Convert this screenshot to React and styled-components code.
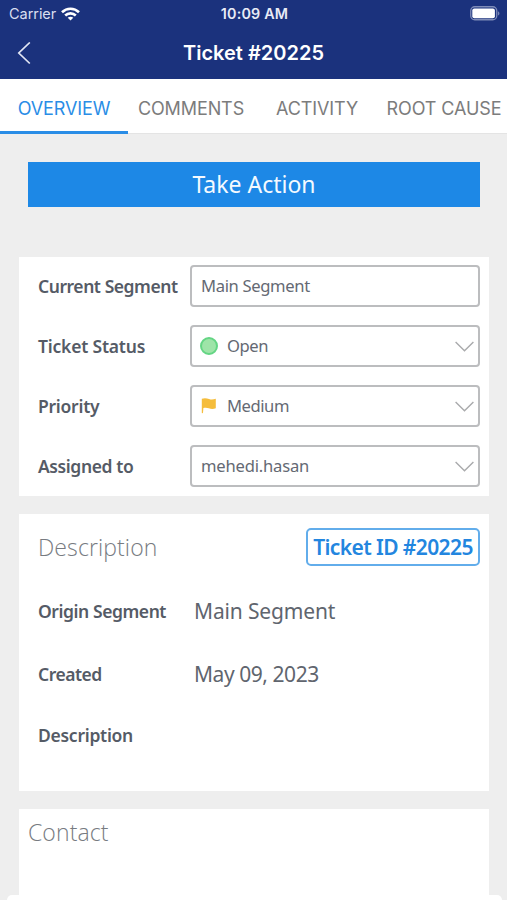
import React from 'react';
import styled, { createGlobalStyle } from 'styled-components';

const GlobalStyle = createGlobalStyle`
  * {
    box-sizing: border-box;
  }
  body {
    margin: 0;
    background: #eeeeee;
    overflow: hidden;
  }
`;

const Screen = styled.div`
  position: relative;
  width: 507px;
  height: 900px;
  overflow: hidden;
  background: #eeeeee;
  font-family: 'Noto Sans', sans-serif;
  color: #555b66;
`;

const Header = styled.header`
  height: 79px;
  background: #1b327d;
  color: #ffffff;
  font-family: Inter, sans-serif;
`;

const StatusBar = styled.div`
  height: 27px;
  padding: 0 7px 0 9px;
  display: grid;
  grid-template-columns: 1fr auto 1fr;
  align-items: center;
`;

const Carrier = styled.div`
  display: flex;
  align-items: center;
  gap: 5px;
  font-size: 14.5px;
  letter-spacing: -0.05px;
  color: #d9def0;
`;

const Clock = styled.div`
  font-size: 14.3px;
  font-weight: 600;
  letter-spacing: 0.2px;
  color: #e8ebf6;
`;

const Battery = styled.svg`
  justify-self: end;
`;

const NavBar = styled.div`
  height: 52px;
  padding: 0 17px;
  display: grid;
  grid-template-columns: 1fr auto 1fr;
  align-items: center;
`;

const Title = styled.h1`
  margin: 0;
  font-size: 20px;
  font-weight: 600;
`;

const Tabs = styled.nav`
  height: 55px;
  display: flex;
  background: #ffffff;
  border-bottom: 1px solid #e4e4e4;
`;

const Tab = styled.div`
  flex: none;
  width: ${(props) => props.width}px;
  height: 55px;
  padding-top: 6px;
  display: flex;
  align-items: center;
  justify-content: center;
  font-family: Inter, sans-serif;
  font-size: 18px;
  letter-spacing: -0.1px;
  white-space: nowrap;
  color: ${(props) => (props.active ? '#2a8de6' : '#7c7c7c')};
  border-bottom: 3px solid ${(props) => (props.active ? '#2a8de6' : 'transparent')};
`;

const Content = styled.main`
  padding: 28px 18px 0 19px;
  display: flex;
  flex-direction: column;
`;

const ActionButton = styled.button`
  height: 45px;
  margin: 0 9px 50px;
  padding: 0 0 1px;
  border: 0;
  background: #1d88e6;
  color: #f4faff;
  font-family: inherit;
  font-size: 23px;
`;

const Card = styled.section`
  height: ${(props) => props.height}px;
  margin-bottom: 18px;
  padding: ${(props) => props.pad};
  background: #ffffff;
`;

const FieldList = styled.div`
  display: flex;
  flex-direction: column;
  gap: 18px;
`;

const Field = styled.div`
  height: 42px;
  display: grid;
  grid-template-columns: 152px 1fr;
  align-items: center;
`;

const Label = styled.div`
  font-size: 17.5px;
  font-weight: 600;
  letter-spacing: ${(props) => props.spacing || 0}px;
  white-space: nowrap;
`;

const Box = styled.div`
  height: 42px;
  padding: 0 4px 0 9px;
  display: flex;
  align-items: center;
  border: 2px solid #bcbdbf;
  border-radius: 4px;
  color: #646973;
`;

const BoxText = styled.span`
  flex: 1;
  padding-bottom: 1px;
  font-size: 16.6px;
  letter-spacing: ${(props) => props.spacing || 0}px;
`;

const Dot = styled.span`
  width: 18px;
  height: 18px;
  margin: 0 9px 0 -1px;
  border: 2px solid #64d584;
  border-radius: 50%;
  background: #9ee4a8;
`;

const Flag = styled.svg`
  margin: 0 9px 0 -1px;
`;

const CardHeader = styled.div`
  height: 38px;
  display: flex;
  align-items: center;
  justify-content: space-between;
`;

const CardTitle = styled.h2`
  margin: 0;
  font-family: 'Open Sans', sans-serif;
  font-size: 23px;
  font-weight: 300;
  line-height: 30px;
  letter-spacing: 0.1px;
  color: #777b81;
`;

const TicketId = styled.div`
  width: 174px;
  height: 38px;
  display: flex;
  align-items: center;
  justify-content: center;
  border: 2px solid #62adeb;
  border-radius: 5px;
  font-size: 21px;
  font-weight: 600;
  white-space: nowrap;
  letter-spacing: -0.6px;
  color: #2386df;
`;

const Details = styled.div`
  padding-top: 13px;
  display: grid;
  grid-template-columns: 156px 1fr;
  grid-template-rows: 63px 63px 59px;
  align-items: center;
`;

const Value = styled.div`
  font-size: 21px;
  letter-spacing: ${(props) => props.spacing || 0}px;
  color: #60656e;
`;

const BottomSheet = styled.div`
  position: absolute;
  left: 7px;
  right: 5px;
  bottom: 0;
  height: 5px;
  border-radius: 8px 8px 0 0;
  background: #ffffff;
`;

function WifiIcon() {
  return (
    <svg width="19" height="14" viewBox="0 0 19 14" fill="none" stroke="#fff" strokeWidth="2.6">
      <path d="M1 5.2C5.8.5 13.2.5 18 5.2" />
      <path d="M4.2 8.5c3-2.9 7.6-2.9 10.6 0" />
      <path d="M9.5 13.5 6.7 10.7c1.6-1.4 4-1.4 5.6 0z" fill="#fff" stroke="none" />
    </svg>
  );
}

function BatteryIcon() {
  return (
    <Battery width="30" height="15" viewBox="0 0 30 15">
      <rect x="0.75" y="0.75" width="26" height="13" rx="4" fill="none" stroke="#7f8cb8" strokeWidth="1.3" />
      <rect x="2.3" y="2.6" width="22.6" height="9.6" rx="2" fill="#fff" />
      <path d="M28.2 5.2c1.6.8 1.6 3.6 0 4.4z" fill="#8d99c2" />
    </Battery>
  );
}

function BackIcon() {
  return (
    <svg width="14" height="23" viewBox="0 0 14 23" fill="none" stroke="#e2e6f4" strokeWidth="1.7">
      <path d="M12.8.5 1.8 11 12.800 21.500" />
    </svg>
  );
}

function Chevron() {
  return (
    <svg width="19" height="11" viewBox="0 0 19 11" fill="none" stroke="#a9aaac" strokeWidth="1.4">
      <path d="M.6 1 9.5 9.7 18.4 1" />
    </svg>
  );
}

function FlagIcon() {
  return (
    <Flag width="18" height="18" viewBox="0 0 18 18" fill="#f5bd3c">
      <path d="M1.800 1.800C4.200.9 6.800 1.200 9 2c2.200.8 4.200.6 6.800-.2V11.300c-2.600 1-4.800.8-7 0-1.800-.6-3.500-.7-5.400-.2L3 15.800c-.2.6-1.200.6-1.200-.1z" />
    </Flag>
  );
}

export default function App() {
  return (
    <Screen>
      <GlobalStyle />
      <Header>
        <StatusBar>
          <Carrier>
            Carrier
            <WifiIcon />
          </Carrier>
          <Clock>10:09 AM</Clock>
          <BatteryIcon />
        </StatusBar>
        <NavBar>
          <BackIcon />
          <Title>Ticket #20225</Title>
        </NavBar>
      </Header>
      <Tabs>
        <Tab width={128} active>OVERVIEW</Tab>
        <Tab width={126}>COMMENTS</Tab>
        <Tab width={126}>ACTIVITY</Tab>
        <Tab width={128}>ROOT CAUSE</Tab>
      </Tabs>
      <Content>
        <ActionButton>Take Action</ActionButton>
        <Card height={239} pad="8px 9px 0 19px">
          <FieldList>
            <Field>
              <Label spacing={-0.45}>Current Segment</Label>
              <Box>
                <BoxText spacing={-0.35}>Main Segment</BoxText>
              </Box>
            </Field>
            <Field>
              <Label spacing={-0.2}>Ticket Status</Label>
              <Box>
                <Dot />
                <BoxText spacing={-0.45}>Open</BoxText>
                <Chevron />
              </Box>
            </Field>
            <Field>
              <Label spacing={-0.25}>Priority</Label>
              <Box>
                <FlagIcon />
                <BoxText spacing={-0.45}>Medium</BoxText>
                <Chevron />
              </Box>
            </Field>
            <Field>
              <Label spacing={-0.4}>Assigned to</Label>
              <Box>
                <BoxText spacing={-0.2}>mehedi.hasan</BoxText>
                <Chevron />
              </Box>
            </Field>
          </FieldList>
        </Card>
        <Card height={277} pad="14px 9px 0 19px">
          <CardHeader>
            <CardTitle>Description</CardTitle>
            <TicketId>Ticket ID #20225</TicketId>
          </CardHeader>
          <Details>
            <Label spacing={-0.43}>Origin Segment</Label>
            <Value spacing={-0.15}>Main Segment</Value>
            <Label spacing={-0.5}>Created</Label>
            <Value spacing={-0.45}>May 09, 2023</Value>
            <Label spacing={-0.27}>Description</Label>
          </Details>
        </Card>
        <Card height={120} pad="8px 9px 0">
          <CardTitle>Contact</CardTitle>
        </Card>
      </Content>
      <BottomSheet />
    </Screen>
  );
}
